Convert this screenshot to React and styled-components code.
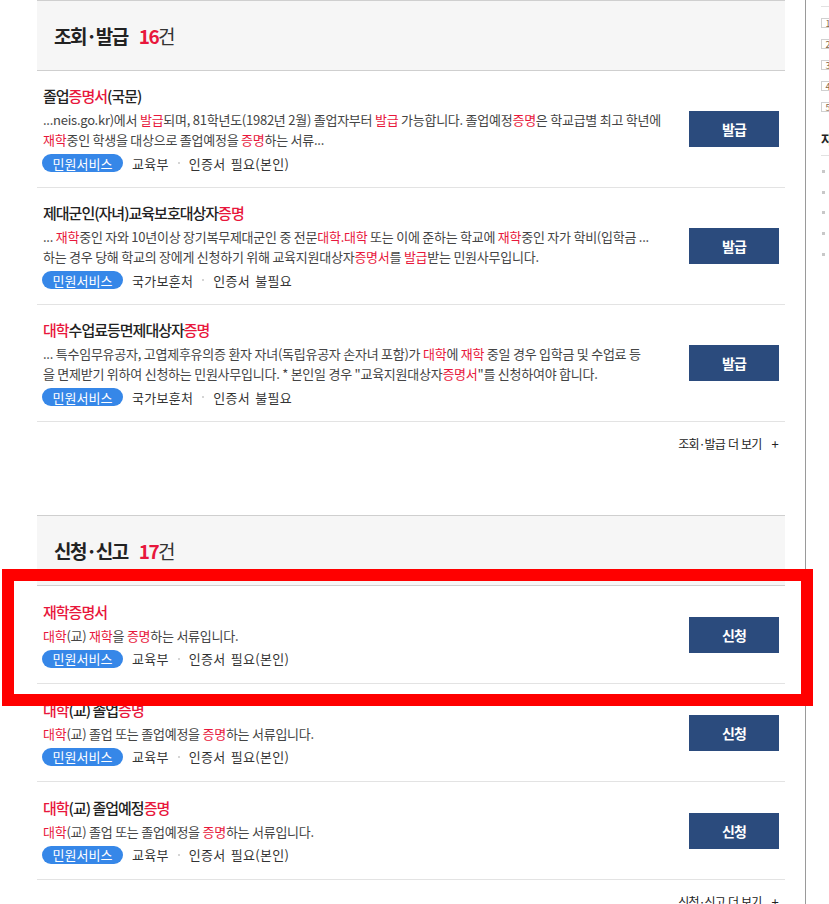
import React from "react";
import styled, { createGlobalStyle } from "styled-components";

const GlobalStyle = createGlobalStyle`
  html, body {
    margin: 0;
    padding: 0;
    overflow: hidden;
    background: #fff;
  }
  body {
    font-family: "Noto Sans CJK KR", "Noto Sans", sans-serif;
    color: #333;
  }
`;

const Page = styled.div`
  position: relative;
  display: flex;
  width: 1100px;
  min-height: 904px;
`;

const Main = styled.main`
  flex-shrink: 0;
  width: 748px;
  margin-left: 37px;
`;

const Section = styled.section`
  margin-bottom: 61px;
`;

const SectionHead = styled.div`
  display: flex;
  align-items: center;
  height: 69px;
  padding-left: 17px;
  background: #f6f6f6;
  border-top: 1px solid #cfcfcf;
  border-bottom: 1px solid #cfcfcf;
`;

const HeadTitle = styled.h2`
  margin: 0;
  font-size: 19px;
  font-weight: 700;
  letter-spacing: -1.5px;
  color: #222;
`;

const Count = styled.span`
  margin-left: 11px;
  color: #e8173c;
`;

const CountUnit = styled.span`
  font-weight: 400;
  color: #333;
`;

const Item = styled.div`
  display: flex;
  align-items: center;
  box-sizing: border-box;
  min-height: 98px;
  padding: 14px 6px 14px 5px;
  border-bottom: 1px solid #e3e3e3;
`;

const ItemBody = styled.div`
  flex: 1;
  min-width: 0;
`;

const ItemTitle = styled.h3`
  margin: 0;
  padding-left: 1px;
  height: 22px;
  line-height: 22px;
  font-size: 15px;
  font-weight: 500;
  letter-spacing: -1px;
  color: #222;
`;

const Desc = styled.p`
  margin: 3px 0 0;
  padding-left: 1px;
  font-size: 13px;
  line-height: 20px;
  letter-spacing: -0.25px;
  color: #444;
`;

const DescLine = styled.span`
  display: block;
  white-space: nowrap;
`;

const Em = styled.em`
  font-style: normal;
  color: #e8173c;
`;

const Tags = styled.div`
  display: flex;
  align-items: center;
  height: 20px;
  margin-top: 3px;
  font-size: 13px;
  letter-spacing: 0.3px;
  word-spacing: 2px;
  color: #333;
`;

const Pill = styled.span`
  display: inline-flex;
  align-items: center;
  justify-content: center;
  width: 81px;
  height: 18px;
  border-radius: 9px;
  background: #3687e8;
  color: #fff;
  font-size: 13px;
  letter-spacing: 0;
  margin-right: 9px;
`;

const Sep = styled.span`
  display: inline-block;
  width: 2px;
  height: 2px;
  margin: 0 9px;
  background: #d5d5d5;
`;

const ActionButton = styled.button`
  flex-shrink: 0;
  width: 90px;
  height: 36px;
  margin-left: 24px;
  border: none;
  background: #2b4b7d;
  color: #fff;
  font-family: inherit;
  font-size: 14px;
  font-weight: 700;
  letter-spacing: -1px;
  cursor: pointer;
`;

const MoreRow = styled.div`
  display: flex;
  justify-content: flex-end;
  padding: 12px 7px 0 0;
  height: 20px;
  line-height: 20px;
`;

const MoreLink = styled.a`
  font-size: 12px;
  letter-spacing: -0.8px;
  word-spacing: 1px;
  color: #222;
  text-decoration: none;
`;

const Plus = styled.span`
  margin-left: 10px;
  font-size: 13px;
`;

const Aside = styled.aside`
  flex-shrink: 0;
  width: 220px;
  margin-left: 20px;
  padding: 6px 0 0 15px;
  border-left: 1px solid #9a9a9a;
`;

const Rule = styled.div`
  height: 1px;
  background: #e2e2e2;
`;

const RankList = styled.ol`
  list-style: none;
  margin: 11px 0 0;
  padding: 0;
`;

const RankItem = styled.li`
  display: flex;
  align-items: flex-start;
  height: 21px;
  font-size: 12px;
  color: #555;
`;

const RankNo = styled.span`
  display: inline-flex;
  align-items: center;
  justify-content: center;
  box-sizing: border-box;
  width: 14px;
  height: 10px;
  border: 1px solid #d0d0d0;
  font-size: 9px;
  line-height: 1;
  color: #8a6a4a;
`;

const AsideTitle = styled.h4`
  margin: 5px 0 0;
  height: 22px;
  line-height: 22px;
  font-size: 13px;
  font-weight: 700;
  color: #222;
`;

const AsideRule = styled(Rule)`
  margin-top: 5px;
`;

const LinkList = styled.ul`
  list-style: none;
  margin: 5px 0 0;
  padding: 0;
`;

const LinkItem = styled.li`
  display: flex;
  align-items: center;
  height: 20.8px;
  padding-left: 1px;
  font-size: 12px;
  color: #555;
  &::before {
    content: "";
    width: 3px;
    height: 3px;
    margin-right: 4px;
    background: #c8c8c8;
  }
`;

const Marker = styled.div`
  position: absolute;
  top: 569px;
  left: 2px;
  width: 811px;
  height: 137px;
  box-sizing: border-box;
  border: 12px solid #ff0000;
  pointer-events: none;
`;

// text in {braces} is the highlighted search keyword
const hl = (text) =>
  text.split(/(\{[^}]*\})/).map((part, i) =>
    part.startsWith("{") ? <Em key={i}>{part.slice(1, -1)}</Em> : part
  );

const sections = [
  {
    title: "조회·발급",
    count: 16,
    action: "발급",
    items: [
      {
        title: "졸업{증명서}(국문)",
        desc: [
          "...neis.go.kr)에서 {발급}되며, 81학년도(1982년 2월) 졸업자부터 {발급} 가능합니다. 졸업예정{증명}은 학교급별 최고 학년에",
          "{재학}중인 학생을 대상으로 졸업예정을 {증명}하는 서류...",
        ],
        org: "교육부",
        cert: "인증서 필요(본인)",
      },
      {
        title: "제대군인(자녀)교육보호대상자{증명}",
        desc: [
          "... {재학}중인 자와 10년이상 장기복무제대군인 중 전문{대학.대학} 또는 이에 준하는 학교에 {재학}중인 자가 학비(입학금 ...",
          "하는 경우 당해 학교의 장에게 신청하기 위해 교육지원대상자{증명서}를 {발급}받는 민원사무입니다.",
        ],
        org: "국가보훈처",
        cert: "인증서 불필요",
      },
      {
        title: "{대학}수업료등면제대상자{증명}",
        desc: [
          "... 특수임무유공자, 고엽제후유의증 환자 자녀(독립유공자 손자녀 포함)가 {대학}에 {재학} 중일 경우 입학금 및 수업료 등",
          "을 면제받기 위하여 신청하는 민원사무입니다. * 본인일 경우 \"교육지원대상자{증명서}\"를 신청하여야 합니다.",
        ],
        org: "국가보훈처",
        cert: "인증서 불필요",
      },
    ],
  },
  {
    title: "신청·신고",
    count: 17,
    action: "신청",
    items: [
      {
        title: "{재학증명서}",
        desc: ["{대학}(교) {재학}을 {증명}하는 서류입니다."],
        org: "교육부",
        cert: "인증서 필요(본인)",
      },
      {
        title: "{대학}(교) 졸업{증명}",
        desc: ["{대학}(교) 졸업 또는 졸업예정을 {증명}하는 서류입니다."],
        org: "교육부",
        cert: "인증서 필요(본인)",
      },
      {
        title: "{대학}(교) 졸업예정{증명}",
        desc: ["{대학}(교) 졸업 또는 졸업예정을 {증명}하는 서류입니다."],
        org: "교육부",
        cert: "인증서 필요(본인)",
      },
    ],
  },
];

const ranks = ["주민등록표 등본", "건강보험자격득실확인서", "지방세 납세증명", "토지대장", "건축물대장"];
const links = ["1. 민원안내", "2. 서식자료", "  ", "1. 정책정보", "2. 보조금24"];

const App = () => (
  <>
    <GlobalStyle />
    <Page>
      <Main>
        {sections.map((sec) => (
          <Section key={sec.title}>
            <SectionHead>
              <HeadTitle>
                {sec.title}
                <Count>{sec.count}</Count>
                <CountUnit>건</CountUnit>
              </HeadTitle>
            </SectionHead>
            {sec.items.map((item) => (
              <Item key={item.title}>
                <ItemBody>
                  <ItemTitle>{hl(item.title)}</ItemTitle>
                  <Desc>
                    {item.desc.map((line, i) => (
                      <DescLine key={i}>{hl(line)}</DescLine>
                    ))}
                  </Desc>
                  <Tags>
                    <Pill>민원서비스</Pill>
                    {item.org}
                    <Sep />
                    {item.cert}
                  </Tags>
                </ItemBody>
                <ActionButton>{sec.action}</ActionButton>
              </Item>
            ))}
            <MoreRow>
              <MoreLink href="#">
                {sec.title} 더 보기<Plus>+</Plus>
              </MoreLink>
            </MoreRow>
          </Section>
        ))}
      </Main>
      <Aside>
        <Rule />
        <RankList>
          {ranks.map((r, i) => (
            <RankItem key={r}>
              <RankNo>{i + 1}</RankNo>
            </RankItem>
          ))}
        </RankList>
        <AsideTitle>자주 찾는 서비스</AsideTitle>
        <AsideRule />
        <LinkList>
          {links.map((l, i) => (
            <LinkItem key={i}>{l}</LinkItem>
          ))}
        </LinkList>
      </Aside>
      <Marker />
    </Page>
  </>
);

export default App;
